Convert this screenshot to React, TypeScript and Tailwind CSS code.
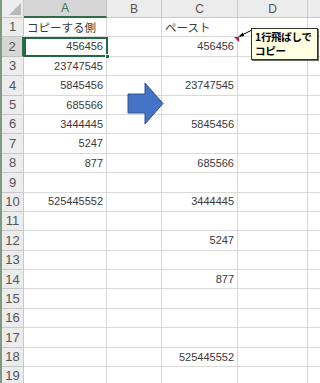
import React from "react";

const cols = [
  { key: "A", w: "w-[83px]" },
  { key: "B", w: "w-[55px]" },
  { key: "C", w: "w-[76px]" },
  { key: "D", w: "w-[70px]" },
];

const colA: Record<number, string> = {
  2: "456456",
  3: "23747545",
  4: "5845456",
  5: "685566",
  6: "3444445",
  7: "5247",
  8: "877",
  10: "525445552",
};

const colC: Record<number, string> = {
  2: "456456",
  4: "23747545",
  6: "5845456",
  8: "685566",
  10: "3444445",
  12: "5247",
  14: "877",
  18: "525445552",
};

const jp = "font-['Noto_Sans_CJK_JP',sans-serif]";
const num = "font-['Liberation_Sans',sans-serif]";

function Cell({ w, children, right }: { w: string; children?: React.ReactNode; right?: boolean }) {
  return (
    <div
      className={`${w} shrink-0 h-full border-r border-b border-[#d9d9d9] flex items-center overflow-visible whitespace-nowrap text-[11px] text-[#3a3a3a] ${
        right ? "justify-end pr-[3px]" : "pl-[3px]"
      }`}
    >
      {children}
    </div>
  );
}

export default function App() {
  const rows = Array.from({ length: 19 }, (_, i) => i + 1);
  return (
    <div className="relative w-[320px] h-[383px] overflow-hidden bg-white border-l-2 border-[#7f9a82]">
      {/* header row */}
      <div className="flex h-[18px] bg-[#ececec]">
        <div className="relative w-[22px] shrink-0 h-full border-r border-b border-[#c8c8c8]">
          <svg className="absolute right-[2px] bottom-[2px]" width="12" height="12" viewBox="0 0 12 12">
            <polygon points="12,0 12,12 0,12" fill="#b9b9b9" />
          </svg>
        </div>
        {cols.map((c) => (
          <div
            key={c.key}
            className={`${c.w} shrink-0 h-full flex items-center justify-center text-[12px] ${num} ${
              c.key === "A"
                ? "bg-[#d6d6d6] text-[#3e6f52] border-r border-[#c0c0c0] border-b-2 border-b-[#2f6b47]"
                : "text-[#555] border-r border-b border-[#c8c8c8]"
            }`}
          >
            {c.key}
          </div>
        ))}
        <div className="flex-1 h-full border-b border-[#c8c8c8]" />
      </div>

      {rows.map((r) => (
        <div key={r} className="flex h-[19.4px]">
          <div
            className={`w-[22px] shrink-0 h-full flex items-center justify-center text-[13px] ${num} ${
              r === 2
                ? "bg-[#d6d6d6] text-[#555] border-b border-[#c0c0c0] border-r-2 border-r-[#2f6b47]"
                : "bg-[#ececec] text-[#555] border-r border-b border-[#c8c8c8]"
            }`}
          >
            {r}
          </div>
          <Cell w={cols[0].w} right={r !== 1}>
            {r === 1 ? <span className={`${jp} text-[11.5px]`}>コピーする側</span> : <span className={num}>{colA[r]}</span>}
          </Cell>
          <Cell w={cols[1].w} />
          <Cell w={cols[2].w} right={r !== 1}>
            {r === 1 ? <span className={`${jp} text-[11.5px]`}>ペースト</span> : <span className={num}>{colC[r]}</span>}
          </Cell>
          <Cell w={cols[3].w} />
          <div className="flex-1 h-full border-b border-[#d9d9d9]" />
        </div>
      ))}

      {/* selection on A2 */}
      <div className="absolute left-[22px] top-[37px] w-[84px] h-[20px] border-2 border-[#1f6b3f] pointer-events-none">
        <div className="absolute right-[-4px] bottom-[-4px] w-[5px] h-[5px] bg-[#1f6b3f] border border-white" />
      </div>

      {/* big blue arrow */}
      <svg className="absolute left-[124px] top-[82px]" width="40" height="44" viewBox="0 0 40 44">
        <polygon
          points="2,12 19,12 19,1 37,21.5 19,42 19,31 2,31"
          fill="#4472c4"
          stroke="#2f528f"
          strokeWidth="1"
        />
      </svg>

      {/* comment indicator and leader */}
      <svg className="absolute left-[228px] top-[26px]" width="26" height="20" viewBox="0 0 26 20">
        <polygon points="4,11 9,11 9,16" fill="#d0103a" />
        <line x1="10" y1="10" x2="22" y2="4" stroke="#000" strokeWidth="1" />
        <polygon points="8,11 13,6.5 14,10" fill="#000" />
      </svg>

      {/* comment box */}
      <div
        className={`absolute left-[249px] top-[28px] w-[67px] h-[32px] bg-[#ffffe1] border border-[#333] shadow-[1px_1px_0_#666] px-[3px] pt-[1px] text-[10.5px] leading-[14px] font-bold text-black whitespace-nowrap tracking-[-0.3px] ${jp}`}
      >
        <div>1行飛ばしで</div>
        <div>コピー</div>
      </div>
    </div>
  );
}
